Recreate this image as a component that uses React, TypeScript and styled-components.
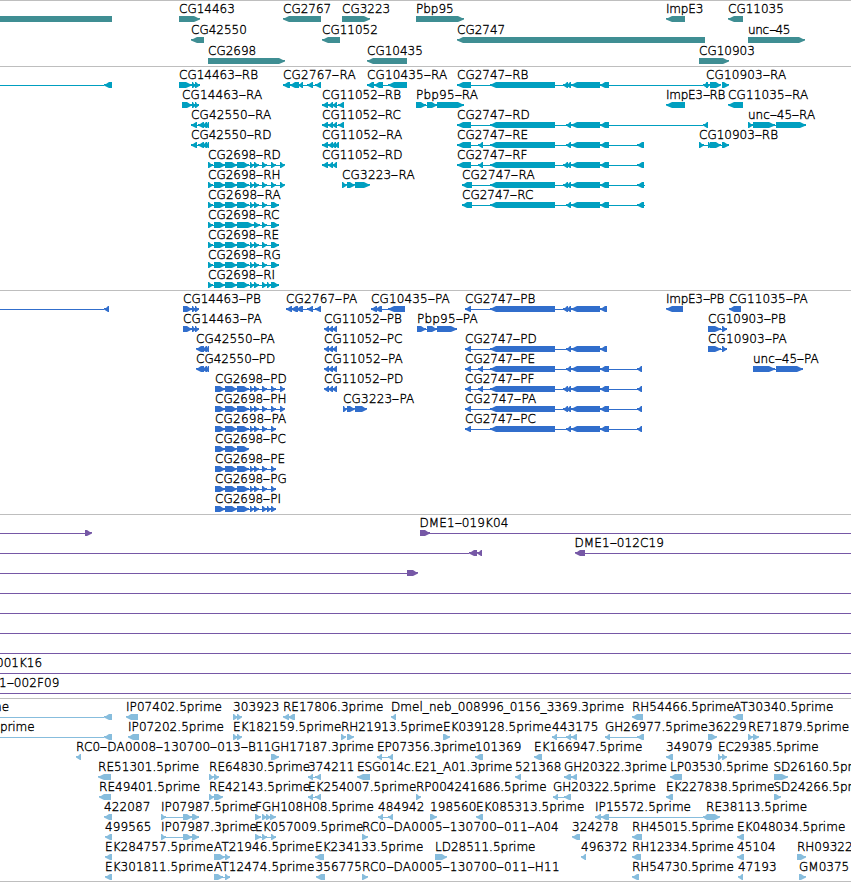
import React from 'react'
import styled, { createGlobalStyle } from 'styled-components'

interface RowData {
    // x, text, optional letter spacing
    labels?: [number, string, number?][]
    // "a<b" points left, "a>b" points right, "a=b" is a plain block, "a-b" is an intron line
    shapes: string
}

interface TrackData {
    name: string
    color: string
    rowHeight: number
    gap: number
    rows: RowData[]
}

const WIDTH = 851

const GlobalStyle = createGlobalStyle`
    body {
        margin: 0;
        background: #fff;
        overflow: hidden;
    }
`

const Browser = styled.main`
    display: flex;
    flex-direction: column;
    width: ${WIDTH}px;
    height: 882px;
    overflow: hidden;
    border-bottom: 1px solid #bebebe;
    box-sizing: border-box;
    font-family: 'DejaVu Sans', sans-serif;
    font-size: 12px;
    font-weight: 200;
    color: #000;
    -webkit-text-stroke: 0.35px #000;
`

const TrackPanel = styled.section<{ $gap: number }>`
    border-top: 1px solid #bebebe;
    padding: 2px 0 ${props => props.$gap}px;
`

const Row = styled.div<{ $height: number }>`
    position: relative;
    height: ${props => props.$height}px;
`

const Label = styled.span<{ $x: number, $spacing: number }>`
    position: absolute;
    top: -2px;
    left: ${props => props.$x}px;
    letter-spacing: ${props => props.$spacing}px;
    line-height: 16px;
    white-space: pre;
`

const Dash = styled.span`
    display: inline-block;
    width: 7px;
    text-align: center;
    transform: scaleX(1.8);
`

const Shapes = styled.svg<{ $color: string }>`
    display: block;
    fill: ${props => props.$color};
    padding-top: 13px;
`

const gene = (tail: string) => `208-279 208>213 214>225 225>237 ${tail}`
const geneTail = '237>249 250>254 254>259 262>267'
const protein = (tail: string) => `215-225 215>225 225>237 237>249 ${tail}`
const proteinTail = '237-276 250>254 254>259 262>267'

const tracks: TrackData[] = [
    {
        name: 'genes',
        color: '#3f8e93',
        rowHeight: 21,
        gap: 0,
        rows: [
            {
                labels: [[179, 'CG14463'], [283, 'CG2767'], [342, 'CG3223'], [416, 'Pbp95'], [666, 'ImpE3', -0.2], [728, 'CG11035']],
                shapes: '0=112 179>200 283<321 342>370 416>464 666<685 728<743',
            },
            {
                labels: [[191, 'CG42550'], [322, 'CG11052'], [457, 'CG2747'], [748, 'unc-45', -0.4]],
                shapes: '191<204 322<340 457<705 748>805',
            },
            {
                labels: [[208, 'CG2698'], [367, 'CG10435'], [699, 'CG10903']],
                shapes: '208>285 367<407 699>729',
            },
        ],
    },
    {
        name: 'transcripts',
        color: '#009fc0',
        rowHeight: 20,
        gap: 1,
        rows: [
            {
                labels: [[179, 'CG14463-RB'], [283, 'CG2767-RA', 0.2], [367, 'CG10435-RA', 0.15], [457, 'CG2747-RB'], [706, 'CG10903-RA', 0.15]],
                shapes: '0-104 104<112 179-200 179>192 192>196 195>200 283-321 283<290 290<299 298<303 307<313 315<321 367-407 367<374 374<383 388<407 457-703 457<471 490<555 563<568 566<571 571<600 600<609 703<708 706>710 710>721 722>729',
            },
            {
                labels: [[182, 'CG14463-RA', 0.15], [322, 'CG11052-RB'], [416, 'Pbp95-RA', 0.2], [666, 'ImpE3-RB', -0.3], [728, 'CG11035-RA', 0.15]],
                shapes: '182-199 182>192 192>196 195>199 322-344 322<328 328<333 332<337 338<344 416-464 416>426 427>437 437>464 666<685 728<743',
            },
            {
                labels: [[191, 'CG42550-RA', 0.15], [322, 'CG11052-RC'], [457, 'CG2747-RD'], [748, 'unc-45-RA']],
                shapes: '191-209 191<197 198<204 202<207 205<209 322-344 322<328 328<333 332<337 338<344 457-703 457<471 490<555 566<571 571<600 600<609 703<708 748-806 748>753 753>775 776>806',
            },
            {
                labels: [[191, 'CG42550-RD'], [322, 'CG11052-RA', 0.15], [457, 'CG2747-RE'], [699, 'CG10903-RB']],
                shapes: '191-209 191<197 198<204 202<207 205<209 322-339 322<328 328<333 331<336 334<339 457-644 457<471 478<483 490<555 566<571 571<600 600<609 637<644 699-729 699>704 708>712 710>721 722>729',
            },
            {
                labels: [[208, 'CG2698-RD'], [322, 'CG11052-RD'], [457, 'CG2747-RF']],
                shapes: gene(`${geneTail} 271>276 279-281 280>285 322-337 322<328 328<333 332<337 457-644 457<471 478<483 490<555 563<568 566<571 571<600 600<609 637<644`),
            },
            {
                labels: [[208, 'CG2698-RH'], [342, 'CG3223-RA', 0.2], [462, 'CG2747-RA', 0.2]],
                shapes: gene(`${geneTail} 271>276 279-281 280>285 342>347 347>355 355>370 462-645 462<472 490<555 563<568 566<571 571<600 600<609 637<644`),
            },
            {
                labels: [[208, 'CG2698-RA', 0.2], [462, 'CG2747-RC']],
                shapes: gene(`${geneTail} 271>279 462-645 462<472 490<555 566<571 571<600 600<609 637<644`),
            },
            { labels: [[208, 'CG2698-RC']], shapes: gene('237>254 254>260 262>267 271>279') },
            { labels: [[208, 'CG2698-RE']], shapes: gene(`${geneTail} 271>279`) },
            { labels: [[208, 'CG2698-RG']], shapes: gene(`${geneTail} 271>279`) },
            { labels: [[208, 'CG2698-RI']], shapes: gene(`${geneTail} 267>271 271>279`) },
        ],
    },
    {
        name: 'proteins',
        color: '#316ecc',
        rowHeight: 20,
        gap: 1,
        rows: [
            {
                labels: [[183, 'CG14463-PB'], [286, 'CG2767-PA', 0.2], [371, 'CG10435-PA', 0.15], [465, 'CG2747-PB'], [666, 'ImpE3-PB', -0.3], [729, 'CG11035-PA', 0.15]],
                shapes: '0-104 104<109 183-199 183>192 192>196 195>199 286-321 286<292 291<298 296<303 307<313 315<321 371-405 371<377 375<382 388<405 465-607 465<471 490<555 563<568 566<571 571<600 600<607 666<683 729<741',
            },
            {
                labels: [[183, 'CG14463-PA', 0.15], [324, 'CG11052-PB'], [417, 'Pbp95-PA', 0.2], [708, 'CG10903-PB']],
                shapes: '183-199 183>192 192>196 195>199 324<329 328<333 332<337 417-457 417>426 427>437 437>457 708-727 708>721 722>727',
            },
            {
                labels: [[196, 'CG42550-PA', 0.15], [324, 'CG11052-PC'], [465, 'CG2747-PD'], [708, 'CG10903-PA', 0.15]],
                shapes: '196<204 202<207 205<209 324<329 328<333 332<337 465-607 465<471 490<555 566<571 571<600 600<607 708-727 708>721 722>727',
            },
            {
                labels: [[196, 'CG42550-PD'], [324, 'CG11052-PA', 0.15], [465, 'CG2747-PE'], [753, 'unc-45-PA']],
                shapes: '196<204 202<207 205<209 324<329 328<333 332<337 465-642 465<471 478<483 490<555 566<571 571<600 600<609 637<642 753-803 753>775 776>803',
            },
            {
                labels: [[215, 'CG2698-PD'], [324, 'CG11052-PD'], [465, 'CG2747-PF']],
                shapes: protein(`${proteinTail} 271>276 276-281 280>285 324<329 328<333 332<337 465-642 465<471 478<483 490<555 563<568 566<571 571<600 600<609 637<642`),
            },
            {
                labels: [[215, 'CG2698-PH'], [343, 'CG3223-PA', 0.2], [465, 'CG2747-PA', 0.2]],
                shapes: protein(`${proteinTail} 271>276 276-281 280>285 343>347 347>355 355>367 465-642 465<471 490<555 563<568 566<571 571<600 600<609 637<642`),
            },
            {
                labels: [[215, 'CG2698-PA', 0.2], [465, 'CG2747-PC']],
                shapes: protein(`${proteinTail} 271>276 465-642 465<471 490<555 566<571 571<600 600<609 637<642`),
            },
            { labels: [[215, 'CG2698-PC']], shapes: protein('') },
            { labels: [[215, 'CG2698-PE']], shapes: protein(`${proteinTail} 271>276`) },
            { labels: [[215, 'CG2698-PG']], shapes: protein(`${proteinTail} 271>276`) },
            { labels: [[215, 'CG2698-PI']], shapes: protein(`${proteinTail} 267>271 271>276`) },
        ],
    },
    {
        name: 'bacs',
        color: '#7658a6',
        rowHeight: 20,
        gap: 1,
        rows: [
            { labels: [[419.5, 'DME1-019K04', 0.1]], shapes: '0-85 85>92 420>430 428-851' },
            { labels: [[574.5, 'DME1-012C19', 0.1]], shapes: '0-469 469<477 477<482 575<585 585-851' },
            { shapes: '0-407 407>418' },
            { shapes: '0-851' },
            { shapes: '0-851' },
            { shapes: '0-851' },
            { shapes: '0-851' },
            { labels: [[-4, '001K16']], shapes: '0-851' },
            { labels: [[-1, '1-002F09', 0.1]], shapes: '0-851' },
        ],
    },
    {
        name: 'ests',
        color: '#87bddd',
        rowHeight: 20,
        gap: 0,
        rows: [
            {
                labels: [[-10, 'me'], [126, 'IP07402.5prime', 0.05], [233, '303923', 0.1], [283, 'RE17806.3prime'], [391, 'Dmel_neb_008996_0156_3369.3prime', 0.05], [632, 'RH54466.5prime'], [733, 'AT30340.5prime', 0.1]],
                shapes: '0-104 104<112 126<138 233>238 237>242 283<289 288<295 391<396 632<643 733<743',
            },
            {
                labels: [[0, 'prime', -0.1], [128, 'IP07202.5prime', 0.05], [233, 'EK182159.5prime', 0.05], [341, 'RH21913.5prime'], [443, 'EK039128.5prime', 0.05], [552, '443175', 0.1], [605, 'GH26977.5prime'], [708, '36229', 0.1], [748, 'RE71879.5prime', 0.05]],
                shapes: '0-104 104<112 128<139 233>238 237>242 341>346 347>354 443>450 552-577 552<557 566<571 571<577 605-644 605<610 637<644 708>717 748>753 753>759',
            },
            {
                labels: [[76, 'RC0-DA0008-130700-013-B11', 0.2], [271, 'GH17187.3prime'], [377, 'EP07356.3prime'], [475, '101369', 0.1], [534, 'EK166947.5prime', 0.05], [666, '349079', 0.1], [718, 'EC29385.5prime']],
                shapes: '76<81 271>279 377-393 377<382 388<393 475<483 534<542 666<673 718>722 722>727',
            },
            {
                labels: [[98, 'RE51301.5prime', 0.05], [209, 'RE64830.5prime', 0.05], [308, '374211', 0.1], [357, 'ESG014c.E21_A01.3prime', -0.05], [515, '521368', 0.1], [564, 'GH20322.3prime'], [670, 'LP03530.5prime'], [773.5, 'SD26160.5prime']],
                shapes: '98<111 209>214 214>219 308-321 308<313 315<321 357<370 515<521 564-577 564<571 571<577 670<682 774>788',
            },
            {
                labels: [[99, 'RE49401.5prime', 0.05], [209, 'RE42143.5prime', 0.05], [308, 'EK254007.5prime', 0.05], [416, 'RP004241686.5prime'], [553, 'GH20322.5prime'], [666, 'EK227838.5prime', 0.05], [773.5, 'SD24266.5prime']],
                shapes: '99<111 209>214 214>223 308-321 308<313 315<321 416>421 553-571 553<558 564<571 666<673 774>781',
            },
            {
                labels: [[104, '422087', 0.1], [161, 'IP07987.5prime', 0.05], [255, 'FGH108H08.5prime'], [378, '484942', 0.1], [430, '198560', 0.1], [476, 'EK085313.5prime', 0.05], [595, 'IP15572.5prime', 0.05], [706, 'RE38113.5prime', 0.05]],
                shapes: '104<112 161-199 161>166 183>192 192>199 255>261 262>267 266>271 270>276 378-393 378<383 388<393 430>437 476<483 595-703 595<601 601<609 703<708 708>720',
            },
            {
                labels: [[105, '499565', 0.1], [161, 'IP07987.3prime', 0.05], [255, 'EK057009.5prime', 0.05], [362, 'RC0-DA0005-130700-011-A04', 0.25], [572, '324278', 0.1], [632, 'RH45015.5prime'], [737, 'EK048034.5prime', 0.05]],
                shapes: '105<112 161-199 161>166 183>192 192>199 255-276 255>261 262>267 271>276 362>368 572<580 632<642 737<744',
            },
            {
                labels: [[105, 'EK284757.5prime', 0.05], [214, 'AT21946.5prime', 0.1], [315, 'EK234133.5prime', 0.05], [435, 'LD28511.5prime'], [581, '496372', 0.1], [632, 'RH12334.5prime'], [737, '45104', 0.1], [797, 'RH09322']],
                shapes: '105<112 214>225 225>230 315<324 435>447 581<586 632<641 737<744 797>806',
            },
            {
                labels: [[105, 'EK301811.5prime', 0.05], [214, 'AT12474.5prime', 0.1], [315.5, '356775', 0.1], [362, 'RC0-DA0005-130700-011-H11', 0.25], [632, 'RH54730.5prime'], [738, '47193', 0.1], [799, 'GM0375']],
                shapes: '105<112 214-230 214>223 225>230 316<325 362>368 632<639 738<743 799>806',
            },
        ],
    },
]

// every shape is 6px high, arrow heads have a blunt 1px tip
const shapePath = (start: number, end: number, dir: string) => {
    const w = end - start
    if (dir === '-') {
        return `M${start} 3H${end}V4H${start}Z`
    }
    if (dir === '=') {
        return `M${start} 0H${end}V6H${start}Z`
    }
    const head = Math.min(w - 1, w > 12 ? 6 : 5)
    const tip = dir === '>' ? end : start
    const tail = dir === '>' ? start : end
    const s = dir === '>' ? -1 : 1
    return `M${tail} 0H${tip + s * head}L${tip + s * 2} 2H${tip}V3.5L${tip + s * head} 6H${tail}Z`
}

const TrackRow: React.FC<{ row: RowData, color: string, height: number }> = ({ row, color, height }) => {
    const paths = row.shapes.split(' ').filter(Boolean).map(shape => {
        const [, start, dir, end] = shape.match(/^(\d+)([<>=-])(\d+)$/) as RegExpMatchArray
        return shapePath(Number(start), Number(end), dir)
    })

    return (
        <Row $height={height}>
            <Shapes $color={color} width={WIDTH} height={6}>
                {paths.map((d, i) => <path key={i} d={d} />)}
            </Shapes>
            {row.labels && row.labels.map(([x, text, spacing]) =>
                <Label key={`${text}_${x}`} $x={x} $spacing={spacing || 0}>
                    {text.split('-').map((part, i) =>
                        <React.Fragment key={i}>
                            {i > 0 && <Dash>-</Dash>}
                            {part}
                        </React.Fragment>
                    )}
                </Label>
            )}
        </Row>
    )
}

const App: React.FC = () => {
    return (
        <Browser>
            <GlobalStyle />
            {tracks.map(track =>
                <TrackPanel key={track.name} $gap={track.gap}>
                    {track.rows.map((row, i) =>
                        <TrackRow key={`${track.name}_${i}`} row={row} color={track.color} height={track.rowHeight} />
                    )}
                </TrackPanel>
            )}
        </Browser>
    )
}

export default App
